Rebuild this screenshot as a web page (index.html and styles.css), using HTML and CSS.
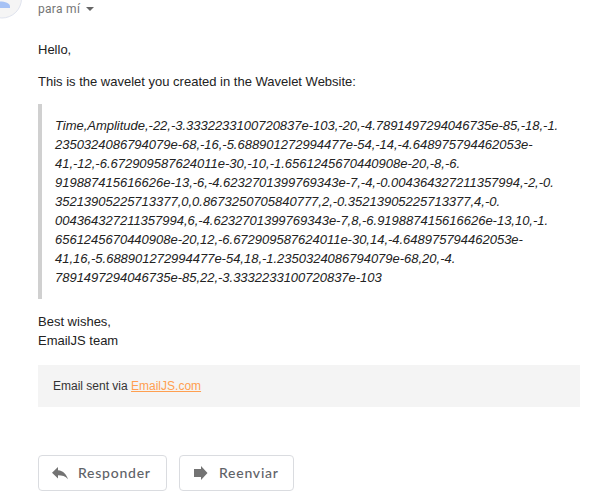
FILE: index.html
```html
<!DOCTYPE html>
<html lang="es">
<head>
<meta charset="utf-8">
<title>EmailJS</title>
<link rel="stylesheet" href="styles.css">
</head>
<body>
<main class="message">
  <div class="avatar"><svg width="24" height="20" viewBox="0 0 24 20"><circle cx="2" cy="-1.500" r="19.500" fill="#f5f5f5" stroke="#dfe3ee"/><path d="M0 1.500C5 1.500 10 3 10 6.500V8H0Z" fill="#a6c2f5"/></svg></div>
  <div class="recipient">para mí <span class="caret"></span></div>
  <p class="hello">Hello,</p>
  <p class="intro">This is the wavelet you created in the Wavelet Website:</p>
  <blockquote class="data">Time,Amplitude,-22,-3.3332233100720837e-103,-20,-4.7891497294046735e-85,-18,-1.<br>2350324086794079e-68,-16,-5.688901272994477e-54,-14,-4.648975794462053e-<br>41,-12,-6.672909587624011e-30,-10,-1.6561245670440908e-20,-8,-6.<br>919887415616626e-13,-6,-4.6232701399769343e-7,-4,-0.004364327211357994,-2,-0.<br>35213905225713377,0,0.8673250705840777,2,-0.35213905225713377,4,-0.<br>004364327211357994,6,-4.6232701399769343e-7,8,-6.919887415616626e-13,10,-1.<br>6561245670440908e-20,12,-6.672909587624011e-30,14,-4.648975794462053e-<br>41,16,-5.688901272994477e-54,18,-1.2350324086794079e-68,20,-4.<br>7891497294046735e-85,22,-3.3332233100720837e-103</blockquote>
  <p class="closing">Best wishes,<br>EmailJS team</p>
  <footer class="sent">Email sent via <a href="#">EmailJS.com</a></footer>
  <div class="actions">
    <button class="reply"><svg width="16" height="14" viewBox="0 0 16 14"><path d="M6 1 0 6.800l6 5.700V9.300c4 0 7.500 .7 10 3.900C14.500 8.500 11.500 4.800 6 4.200Z"/></svg><span>Responder</span></button>
    <button class="forward"><svg width="16" height="14" viewBox="0 0 16 14"><path d="M1 3h7V0l6.500 7L8 14v-3H1Z"/></svg><span>Reenviar</span></button>
  </div>
</main>
</body>
</html>
```
FILE: styles.css
```css
* { box-sizing: border-box; }
body { margin: 0; background: #fff; color: #222; font: 13px/19px "Liberation Sans", Arial, sans-serif; }
.message { height: 503px; padding: 0 12px 0 38px; overflow: hidden; position: relative; }
.avatar { position: absolute; left: 0; top: 0; }
.avatar svg { display: block; }
.recipient { height: 18px; font: 12px/18px Roboto, sans-serif; letter-spacing: .3px; color: #757575; display: flex; align-items: center; gap: 6px; }
.caret { border: 4px solid transparent; border-top-color: #666; border-bottom: 0; }
p { margin: 0; }
.hello { margin-top: 22px; }
.intro { margin-top: 13px; }
.data { margin: 13px 0; border-left: 4px solid #d0d0d0; padding: 12px 0 12px 13px; height: 195px; font-style: italic; white-space: nowrap; letter-spacing: -.015px; }
.sent { height: 42px; margin-top: 15px; padding: 0 15px; background: #f4f4f4; color: #333; font-size: 12px; line-height: 42px; }
.sent a { color: #ff9f50; }
.actions { margin-top: 48px; display: flex; gap: 12px; }
button { height: 36px; border: 1px solid #dadce0; border-radius: 4px; background: #fff; padding: 0 0 0 13px; display: flex; align-items: center; gap: 10px; color: #5f6368; font: 500 14px Lato, sans-serif; letter-spacing: .75px; }
button span { margin-bottom: 2px; }
button svg { fill: #737373; }
.reply { width: 129px; }
.forward { width: 115px; }
```
